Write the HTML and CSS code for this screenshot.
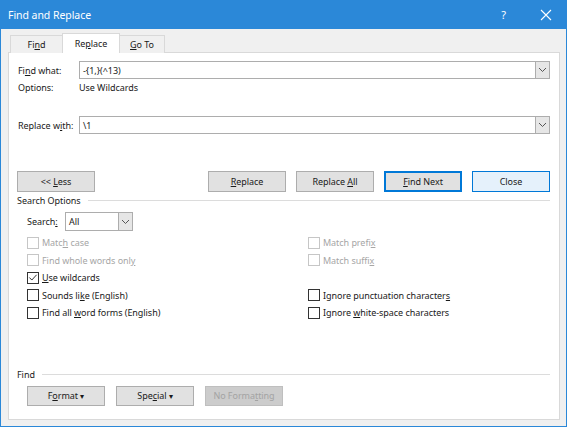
FILE: index.html
```html
<!DOCTYPE html>
<html lang="en">
<head>
    <meta charset="UTF-8">
    <title>Find and Replace</title>
    <link rel="stylesheet" href="styles.css">
</head>
<body>
    <div class="window">
        <div class="titlebar">
            <span class="title">Find and Replace</span>
            <span class="help">?</span>
            <svg class="close-x" width="12" height="12" viewBox="0 0 12 12">
                <path d="M1 1 L11 11 M11 1 L1 11" stroke="#fff" stroke-width="1.1" fill="none"/>
            </svg>
        </div>
        <div class="body">
            <div class="tabs">
                <div class="tab"><span>Fi<u>n</u>d</span></div>
                <div class="tab active"><span>Re<u>p</u>lace</span></div>
                <div class="tab"><span><u>G</u>o To</span></div>
            </div>
            <div class="panel">
                <div class="field-row">
                    <label class="field-label">Fi<u>n</u>d what:</label>
                    <div class="combo">
                        <span class="combo-text">-{1,}(^13)</span>
                        <span class="combo-btn"><svg width="9" height="6" viewBox="0 0 9 6"><path d="M1 1 L4.5 4.5 L8 1" stroke="#555" fill="none"/></svg></span>
                    </div>
                </div>
                <div class="options-row">
                    <span class="field-label">Options:</span>
                    <span>Use Wildcards</span>
                </div>
                <div class="field-row replace-row">
                    <label class="field-label">Replace w<u>i</u>th:</label>
                    <div class="combo">
                        <span class="combo-text">\1</span>
                        <span class="combo-btn"><svg width="9" height="6" viewBox="0 0 9 6"><path d="M1 1 L4.5 4.5 L8 1" stroke="#555" fill="none"/></svg></span>
                    </div>
                </div>
                <div class="button-row">
                    <button class="btn">&lt;&lt; <u>L</u>ess</button>
                    <span class="spacer"></span>
                    <button class="btn"><u>R</u>eplace</button>
                    <button class="btn">Replace <u>A</u>ll</button>
                    <button class="btn default"><u>F</u>ind Next</button>
                    <button class="btn focus">Close</button>
                </div>
                <div class="group-title">
                    <span>Search Options</span>
                    <span class="group-line"></span>
                </div>
                <div class="search-row">
                    <span class="search-label">Search<u>:</u></span>
                    <div class="combo small">
                        <span class="combo-text">All</span>
                        <span class="combo-btn"><svg width="9" height="6" viewBox="0 0 9 6"><path d="M1 1 L4.5 4.5 L8 1" stroke="#555" fill="none"/></svg></span>
                    </div>
                </div>
                <div class="checks">
                    <div class="check-col">
                        <div class="check disabled"><span class="box"></span><span>Matc<u>h</u> case</span></div>
                        <div class="check disabled"><span class="box"></span><span>Find whole words onl<u>y</u></span></div>
                        <div class="check"><span class="box"><svg width="11" height="11" viewBox="0 0 11 11"><path d="M1.5 5.5 L4.2 8.3 L9.5 2.5" stroke="#333" stroke-width="1.1" fill="none"/></svg></span><span><u>U</u>se wildcards</span></div>
                        <div class="check"><span class="box"></span><span>Sounds li<u>k</u>e (English)</span></div>
                        <div class="check"><span class="box"></span><span>Find all <u>w</u>ord forms (English)</span></div>
                    </div>
                    <div class="check-col">
                        <div class="check disabled"><span class="box"></span><span>Match prefi<u>x</u></span></div>
                        <div class="check disabled"><span class="box"></span><span>Match suffi<u>x</u></span></div>
                        <div class="check"></div>
                        <div class="check"><span class="box"></span><span>Ignore punctuation character<u>s</u></span></div>
                        <div class="check"><span class="box"></span><span>Ignore <u>w</u>hite-space characters</span></div>
                    </div>
                </div>
                <div class="group-title find-group">
                    <span>Find</span>
                    <span class="group-line"></span>
                </div>
                <div class="format-row">
                    <button class="btn">F<u>o</u>rmat <span class="caret">&#9662;</span></button>
                    <button class="btn">Spe<u>c</u>ial <span class="caret">&#9662;</span></button>
                    <button class="btn disabled">No Forma<u>t</u>ting</button>
                </div>
            </div>
        </div>
    </div>
</body>
</html>
```

FILE: styles.css
```css
* {
    box-sizing: border-box;
}
body {
    margin: 0;
    font-family: "Noto Sans", "Open Sans", sans-serif;
    font-size: 9px;
    letter-spacing: -0.05px;
    color: #1a1a1a;
}
u {
    text-decoration: underline;
    text-underline-offset: 1px;
}
.window {
    width: 567px;
    height: 427px;
    background: #f0f0f0;
    border: 1px solid #2b88d8;
    border-top: none;
    display: flex;
    flex-direction: column;
}
.titlebar {
    height: 29px;
    background: #2b88d8;
    color: #fff;
    display: flex;
    align-items: center;
    padding: 0 0 0 7px;
    flex-shrink: 0;
}
.title {
    font-size: 10.5px;
    flex: 1;
}
.help {
    font-size: 11px;
    margin-right: 34px;
}
.close-x {
    margin-right: 14px;
}
.body {
    flex: 1;
    padding: 4px 6px 6px 7px;
    display: flex;
    flex-direction: column;
}
.tabs {
    display: flex;
    align-items: flex-end;
    height: 20px;
    padding-left: 2px;
    margin-bottom: -1px;
    position: relative;
    z-index: 1;
}
.tab {
    height: 18px;
    border: 1px solid #d9d9d9;
    border-bottom: none;
    background: #f0f0f0;
    display: flex;
    align-items: center;
    justify-content: center;
    width: 53px;
    margin-right: -1px;
}
.tab:nth-child(2) {
    width: 58px;
}
.tab:nth-child(3) {
    width: 46px;
}
.tab.active {
    height: 20px;
    background: #fff;
}
.panel {
    flex: 1;
    background: #fff;
    border: 1px solid #d9d9d9;
    padding: 8px 9px 0 8px;
}
.field-row {
    display: flex;
    align-items: center;
    height: 18px;
}
.field-label {
    width: 62px;
    flex-shrink: 0;
    padding-left: 1px;
}
.combo {
    flex: 1;
    height: 18px;
    border: 1px solid #adadad;
    display: flex;
    align-items: center;
    background: #fff;
}
.combo-text {
    flex: 1;
    padding-left: 3px;
}
.combo-btn {
    width: 14px;
    height: 16px;
    background: #e6e6e6;
    border-left: 1px solid #adadad;
    display: flex;
    align-items: center;
    justify-content: center;
}
.options-row {
    display: flex;
    height: 17px;
    align-items: center;
}
.replace-row {
    margin-top: 20px;
}
.button-row {
    display: flex;
    margin-top: 37px;
    gap: 10px;
}
.spacer {
    flex: 1;
}
.btn {
    width: 78px;
    height: 21px;
    font: inherit;
    letter-spacing: inherit;
    color: #1a1a1a;
    background: #e1e1e1;
    border: 1px solid #adadad;
    padding: 0;
}
.btn.default {
    border: 1px solid #0078d7;
    box-shadow: inset 0 0 0 1px #0078d7;
}
.btn.focus {
    background: #e5f1fb;
    border-color: #0078d7;
}
.btn.disabled {
    background: #cccccc;
    border-color: #bfbfbf;
    color: #a3a3a3;
}
.caret {
    font-size: 8px;
}
.group-title {
    display: flex;
    align-items: center;
    margin-top: 2px;
    height: 13px;
}
.group-line {
    flex: 1;
    height: 1px;
    background: #dcdcdc;
    margin-left: 7px;
}
.search-row {
    display: flex;
    align-items: center;
    margin-top: 5px;
    padding-left: 10px;
}
.search-label {
    width: 38px;
}
.combo.small {
    flex: none;
    width: 68px;
    height: 19px;
}
.combo.small .combo-btn {
    height: 17px;
}
.checks {
    display: flex;
    margin-top: 3px;
    padding-left: 10px;
}
.check-col {
    width: 281px;
    flex-shrink: 0;
}
.check {
    display: flex;
    align-items: center;
    gap: 3px;
    height: 17.5px;
}
.check.disabled {
    color: #a6a6a6;
}
.box {
    width: 12px;
    height: 12px;
    border: 1px solid #333;
    background: #fff;
    display: flex;
    align-items: center;
    justify-content: center;
}
.check.disabled .box {
    border-color: #c6c6c6;
}
.find-group {
    margin-top: 46px;
}
.format-row {
    display: flex;
    gap: 11px;
    margin-top: 5px;
    padding-left: 10px;
}
.format-row .btn {
    width: 78px;
    height: 20px;
}
```
